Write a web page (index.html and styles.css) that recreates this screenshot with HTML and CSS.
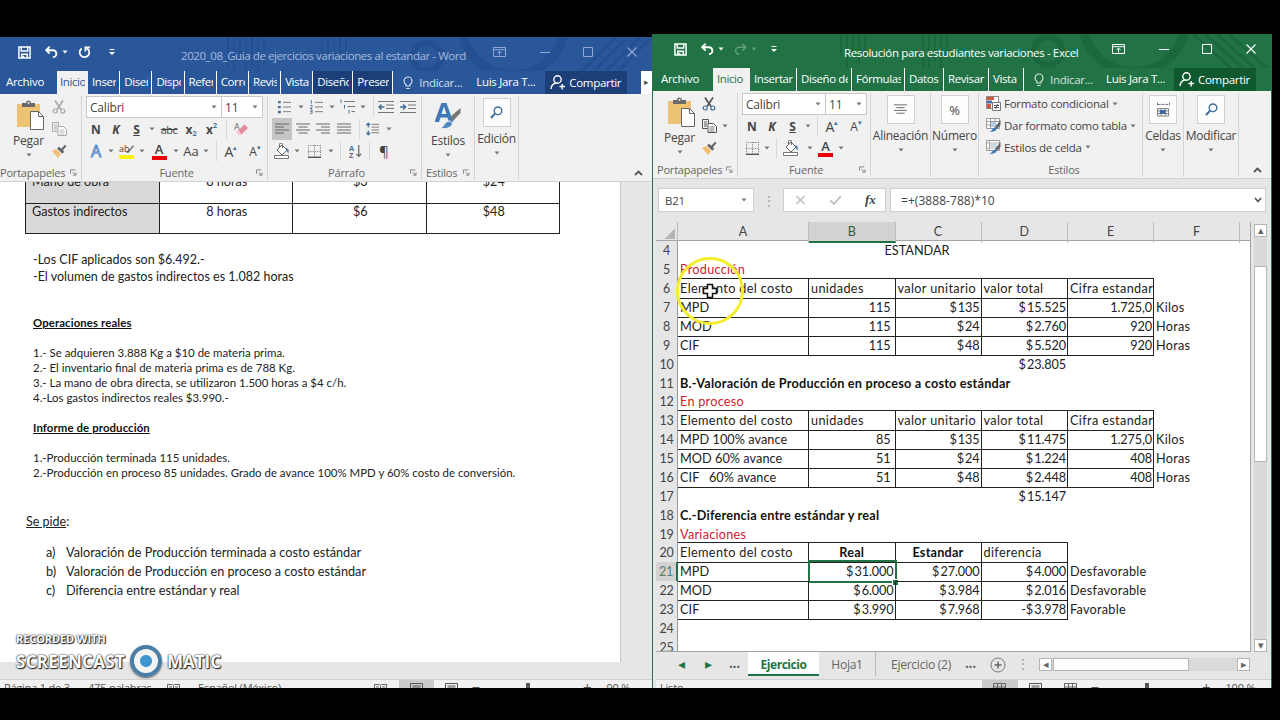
FILE: index.html
```html
<!DOCTYPE html>
<html lang="es">

<head>
    <meta charset="UTF-8">
    <title>Variaciones al estandar</title>
    <link rel="stylesheet" href="styles.css">
</head>

<body>
    <svg class="defs">
        <symbol id="save" viewBox="0 0 14 14"><path d="M1 1h12v12H1zM3.5 1v4.5h7V1M4 13V9h6v4M6 10.5v2" fill="none" stroke="currentColor" stroke-width="1.6" /></symbol>
        <symbol id="undo" viewBox="0 0 14 14"><path d="M1 4.5h7.5a3.7 3.7 0 0 1 0 7.5M5 .8L1.3 4.5 5 8.2" fill="none" stroke="currentColor" stroke-width="2.1" /></symbol>
        <symbol id="redo" viewBox="0 0 14 14"><path d="M13 4.5H5.5a3.7 3.7 0 0 0 0 7.5M9 .8l3.7 3.7L9 8.2" fill="none" stroke="currentColor" stroke-width="1.6" /></symbol>
        <symbol id="repeat" viewBox="0 0 14 14"><path d="M4 2.6a5.2 5.2 0 1 0 5.6-.2M8 6V1.5h5" fill="none" stroke="currentColor" stroke-width="1.9" /></symbol>
        <symbol id="custom" viewBox="0 0 8 8"><path d="M1.5 1.5h5" stroke="currentColor" /><path d="M1 4h6L4 7z" fill="currentColor" /></symbol>
        <symbol id="down" viewBox="0 0 6 4"><path d="M.5.5h5L3 3.4z" fill="currentColor" /></symbol>
        <symbol id="ropt" viewBox="0 0 13 11"><path d="M.5.5h12v9H.5zM.5 2.7h12M6.5 8.5V4M4.5 6l2-2 2 2" fill="none" stroke="currentColor" /></symbol>
        <symbol id="min" viewBox="0 0 10 10"><path d="M0 5.5h10" stroke="currentColor" /></symbol>
        <symbol id="max" viewBox="0 0 10 10"><path d="M.5.5h9v9h-9z" fill="none" stroke="currentColor" /></symbol>
        <symbol id="close" viewBox="0 0 10 10"><path d="M.5.5l9 9M9.5.5l-9 9" stroke="currentColor" stroke-width="1.1" /></symbol>
        <symbol id="bulb" viewBox="0 0 10 14"><path d="M3 10V8.6C1.600 7.600 1 6.500 1 5a4 4 0 0 1 8 0c0 1.500-.6 2.600-2 3.600V10zM3.300 12.500h3.400" fill="none" stroke="currentColor" stroke-width="1.200" /></symbol>
        <symbol id="person" viewBox="0 0 15 15"><circle cx="7.500" cy="4.500" r="3.700" fill="none" stroke="currentColor" stroke-width="1.400" /><path d="M1 14c.3-3.500 2.300-5.500 5-6M9.500 11.500H15M12.200 9v5.500" fill="none" stroke="currentColor" stroke-width="1.400" /></symbol>
        <symbol id="paste" viewBox="0 0 27 30"><path d="M0 4h23v23H0z" fill="#eec273" /><path d="M5 3h4a2.500 2.500 0 0 1 5 0h4v4H5z" fill="#6a6a6a" /><circle cx="11.500" cy="3" r="1" fill="#eee" /><path d="M13.500 11.500h8l5 5v13h-13z" fill="#fff" stroke="#666" /><path d="M21.500 11.500v5h5" fill="none" stroke="#666" /></symbol>
        <symbol id="cut" viewBox="0 0 14 14"><path d="M3 .5l6 9M11 .5l-6 9" stroke="currentColor" stroke-width="1.700" /><circle cx="3.200" cy="11" r="2" fill="none" stroke="var(--ring)" stroke-width="1.200" /><circle cx="10.800" cy="11" r="2" fill="none" stroke="var(--ring)" stroke-width="1.200" /></symbol>
        <symbol id="copy" viewBox="0 0 15 14"><path d="M.5.5h6v3.500M.5.5v9h5M2 3h3M2 5h3M2 7h3" fill="none" stroke="currentColor" /><path d="M6 4.500h5.500l3 3v6H6z" fill="#fff" stroke="currentColor" /><path d="M7.500 8h5M7.500 10h5M7.500 12h5" stroke="currentColor" stroke-width=".8" /></symbol>
        <symbol id="brush" viewBox="0 0 15 14"><path d="M0 7l4-2 5 5-3 4z" fill="#efbf73" /><path d="M5 4.500l2-1.800 2.300 2L13 .8l1.500 1.500-3.600 4 1.400 1.500-2 2z" fill="#666" /></symbol>
        <symbol id="eraser" viewBox="0 0 14 14"><text x="0" y="8" font-size="9" font-family="Open Sans" fill="#666">A</text><path d="M10.500 2.500l3.500 3.500-6.500 6.500H4.500L2.500 10z" fill="#e58da0" /><path d="M2.500 10l2 2.500h3L4.700 8z" fill="#f6ccd4" /></symbol>
        <symbol id="marker" viewBox="0 0 16 16"><path d="M0 12h15v4H0z" fill="#fbf316" /><path d="M7 10L14 2l1 1.500L9.500 10z" fill="#888" /><text x="0" y="9" font-size="9" font-family="Open Sans" fill="#444">ab</text></symbol>
        <symbol id="bucket" viewBox="0 0 16 16"><path d="M3 7l5-5 5 5-5 5z" fill="#fff" stroke="#666" /><path d="M5.500 5V1.500a1.500 1.500 0 0 1 3 0V5" fill="none" stroke="#666" /><path d="M12 5c3 .5 3 3 2.500 5.500L12.500 8z" fill="#4d7fb0" /><path d="M.5 12.500h14v3H.5z" fill="#fff" stroke="#777" /></symbol>
        <symbol id="borders" viewBox="0 0 13 13"><path d="M.5 0v12M6.500 0v12M12.500 0v12M0 .5h13M0 6.500h13" stroke="#777" stroke-dasharray="1 1.300" /><path d="M0 12.300h13" stroke="#555" stroke-width="1.400" /></symbol>
        <symbol id="bullets" viewBox="0 0 14 15"><path d="M0 1h3v2.500H0zM0 6.300h3v2.500H0zM0 11.600h3v2.500H0z" fill="#41719c" /><path d="M5.500 2.500H14M5.500 7.500H14M5.500 12.500H14" stroke="#777" /></symbol>
        <symbol id="numbers" viewBox="0 0 14 15"><path d="M1.500 0v4M.3 5.800h2v1.600l-2 1.700h2.200M.3 10.600h2v3.700h-2M.3 12.400h2" stroke="#41719c" fill="none" stroke-width=".9" /><path d="M5.500 2.500H14M5.500 7.500H14M5.500 12.500H14" stroke="#777" /></symbol>
        <symbol id="multi" viewBox="0 0 16 15"><path d="M1 0v3.500M4.500 5.500v3.500M9 10.500V14" stroke="#41719c" /><path d="M4 2h11M7.500 7H15M11.500 12H15" stroke="#777" /></symbol>
        <symbol id="outdent" viewBox="0 0 16 13"><path d="M0 1h16M8 4.500h8M8 8h8M0 12h16" stroke="#777" /><path d="M6.500 6.500H1M3.500 4L1 6.500 3.500 9" stroke="#41719c" fill="none" stroke-width="1.500" /></symbol>
        <symbol id="indent" viewBox="0 0 16 13"><path d="M0 1h16M8 4.500h8M8 8h8M0 12h16" stroke="#777" /><path d="M0 6.500h5.500M3 4l2.500 2.500L3 9" stroke="#41719c" fill="none" stroke-width="1.500" /></symbol>
        <symbol id="al" viewBox="0 0 14 12"><path d="M0 1h14M0 4h9M0 7h14M0 10h9" stroke="#666" /></symbol>
        <symbol id="ac" viewBox="0 0 14 12"><path d="M0 1h14M2.500 4h9M0 7h14M2.500 10h9" stroke="#666" /></symbol>
        <symbol id="arr" viewBox="0 0 14 12"><path d="M0 1h14M5 4h9M0 7h14M5 10h9" stroke="#666" /></symbol>
        <symbol id="aj" viewBox="0 0 14 12"><path d="M0 1h14M0 4h14M0 7h14M0 10h14" stroke="#666" /></symbol>
        <symbol id="spacing" viewBox="0 0 14 15"><path d="M6 2.500h8M6 5.500h8M6 8.500h8M6 11.500h8" stroke="#777" /><path d="M2.500 1v5M.5 3.500l2-2.300 2 2.300M2.500 9v5M.5 11.500l2 2.300 2-2.300" stroke="#41719c" fill="none" stroke-width="1.300" /></symbol>
        <symbol id="sort" viewBox="0 0 14 15"><text x="0" y="7" font-size="8" font-family="Open Sans" font-weight="bold" fill="#41719c">A</text><text x="0" y="14.500" font-size="8" font-family="Open Sans" font-weight="bold" fill="#7d5a86">Z</text><path d="M10.500 1v12M8 10.500l2.500 2.700L13 10.500" stroke="#666" fill="none" stroke-width="1.300" /></symbol>
        <symbol id="launch" viewBox="0 0 8 7"><path d="M.5 5V.5H6M3 3l3.500 3.500M6.800 3.500V6.500H3.500" fill="none" stroke="#777" /></symbol>
        <symbol id="styles" viewBox="0 0 26 29"><text x="-.5" y="20.500" font-size="27" font-family="Open Sans" font-weight="bold" fill="#3f79b5">A</text><path d="M15 16L25.500 7v5L18 20z" fill="#777" /><path d="M5 27c4 0 4-7 10-7 3 1 3 4 0 6-3 2-7 2-10 1z" fill="#4f88c1" stroke="#f1f1f1" /></symbol>
        <symbol id="lens" viewBox="0 0 13 13"><circle cx="8" cy="4.800" r="3.800" fill="none" stroke="#3f6f9f" stroke-width="1.400" /><path d="M5 7.800L1 12" stroke="#3f6f9f" stroke-width="2" /></symbol>
        <symbol id="up" viewBox="0 0 9 6"><path d="M1 5l3.500-3.500L8 5" fill="none" stroke="#555" stroke-width="1.800" /></symbol>
        <symbol id="cond" viewBox="0 0 15 15"><path d="M.5.500h12v12H.5z" fill="#fff" stroke="#888" /><path d="M1 1h7v3H1zM1 8h4v4H1z" fill="#cf5a3c" /><path d="M1 4.500h5v3H1z" fill="#4472a8" /><path d="M6.500 6.500h8v8h-8z" fill="#fff" stroke="#777" /><path d="M8 9.500h5M8 11.500h5M12 8l-3 5" stroke="#444" stroke-width=".9" /></symbol>
        <symbol id="tblfmt" viewBox="0 0 15 15"><path d="M.5.500h13v10H.5z" fill="#fff" stroke="#999" /><path d="M.5 3.500h13M.5 7h13M4.500.5v10M9 .5v10" stroke="#999" /><path d="M5 4h5v5H5z" fill="#b9cde2" /><path d="M9 9l5.500-7v5L11 11z" fill="#666" /><path d="M3 14c3 0 3-4.500 6.500-4.500 2 1 1.500 4.500-6.500 4.500z" fill="#3f79b5" /></symbol>
        <symbol id="cellfmt" viewBox="0 0 15 15"><path d="M.5.500h13v10H.5z" fill="#fff" stroke="#999" /><path d="M.5 3h13M.5 8h13M3.500.5v10" stroke="#aaa" /><path d="M4 3.500h7v4H4z" fill="#cdd9e6" /><path d="M9 9l5.500-7v5L11 11z" fill="#666" /><path d="M3 14c3 0 3-4.500 6.500-4.500 2 1 1.500 4.500-6.500 4.500z" fill="#3f79b5" /></symbol>
        <symbol id="cells" viewBox="0 0 14 16"><path d="M.5 0v4M13.500 0v4M1 2h12" stroke="#666" stroke-dasharray="3 1" /><path d="M.5 6.500h12v8H.5zM.5 9h12M.5 11.800h12M4.500 6v8M9 6v8" fill="none" stroke="#777" /><path d="M3 8h6v4H3z" fill="#3a6aa3" /></symbol>
        <symbol id="book" viewBox="0 0 13 10"><path d="M.5 1.500h5l1 1 1-1h5v8H.5zM6.500 2.500V10M2 4h3M2 6h3M8 4h3M8 6h3M2 8h3M8 8h3" fill="none" stroke="#666" /></symbol>
        <symbol id="page" viewBox="0 0 13 10"><path d="M.5.5h12v10H.5zM2.500 3h8M2.500 5h8M2.500 7h8M2.500 9h8" fill="none" stroke="#555" /></symbol>
        <symbol id="gridv" viewBox="0 0 13 10"><path d="M.5.5h12v10H.5zM.5 4h12M.5 7.500h12M4.500 0v10M8.500 0v10" fill="none" stroke="#666" /></symbol>
    </svg>

    <div class="desktop">
        <!-- WORD -->
        <section class="win word">
            <header class="titlebar">
                <svg class="deco" width="652" height="56"><g fill="none" stroke="#173f7c" opacity=".3"><path d="M228 0v30M234 0v42M240 0v24M246 0v38M252 0v28M258 0v44M264 0v30M322 0v25M328 0v25M334 0v25M340 0v25M346 0v25" stroke-width="2" /><circle cx="427" cy="20" r="14" stroke-width="6" /><path d="M463 0a52 52 0 0 0 100 0" stroke-width="9" /><path d="M590 50l50-50M600 52l50-50M580 48l46-46M570 46l46-46" stroke-width="3" /></g></svg>
                <div class="qat">
                    <svg class="q14"><use href="#save" /></svg>
                    <svg class="q14 undo"><use href="#undo" /></svg>
                    <svg class="q6"><use href="#down" /></svg>
                    <svg class="q14 rep"><use href="#repeat" /></svg>
                    <svg class="q8"><use href="#custom" /></svg>
                </div>
                <div class="title">2020_08_Guia de ejercicios variaciones al estandar - Word</div>
                <div class="winbtns">
                    <svg class="wr"><use href="#ropt" /></svg>
                    <svg><use href="#min" /></svg>
                    <svg><use href="#max" /></svg>
                    <svg><use href="#close" /></svg>
                </div>
            </header>
            <nav class="tabs">
                <span class="file">Archivo</span>
                <span class="tab on">Inicio</span>
                <span class="tab">Insertar</span>
                <span class="tab">Diseño</span>
                <span class="tab">Dispos</span>
                <span class="tab">Refere</span>
                <span class="tab">Corres</span>
                <span class="tab">Revisar</span>
                <span class="tab">Vista</span>
                <span class="tab ctx">Diseño</span>
                <span class="tab ctx">Presen</span>
                <span class="tell"><svg><use href="#bulb" /></svg>Indicar...</span>
                <span class="user">Luis Jara T...</span>
                <span class="share"><svg><use href="#person" /></svg>Compartir</span>
                <span class="more">▸</span>
            </nav>
            <div class="ribbon">
                <div class="group g-clip">
                    <div class="body">
                        <div class="big"><svg class="paste"><use href="#paste" /></svg><b>Pegar</b><svg class="dn"><use href="#down" /></svg></div>
                        <div class="stack off">
                            <svg class="s14"><use href="#cut" /></svg>
                            <svg class="s15"><use href="#copy" /></svg>
                            <svg class="s15"><use href="#brush" /></svg>
                        </div>
                    </div>
                    <footer>Portapapeles<svg><use href="#launch" /></svg></footer>
                </div>
                <div class="group g-font">
                    <div class="body col">
                        <div class="combos"><span class="combo cf">Calibri<svg class="dn"><use href="#down" /></svg></span><span class="combo cs">11<svg class="dn"><use href="#down" /></svg></span></div>
                        <div class="row">
                            <i class="w20 bold">N</i><i class="w20 bold ital">K</i><i class="w22 bold und">S</i><i class="w10"><svg class="dn"><use href="#down" /></svg></i>
                            <i class="w24 strike">abc</i><i class="w20 bold">x<sub>2</sub></i><i class="w22 bold">x<sup>2</sup></i><i class="sep"></i><i class="w28"><svg class="s14"><use href="#eraser" /></svg></i>
                        </div>
                        <div class="row">
                            <i class="w20 fx-a">A</i><i class="w10"><svg class="dn"><use href="#down" /></svg></i>
                            <i class="w22"><svg class="s16"><use href="#marker" /></svg></i><i class="w10"><svg class="dn"><use href="#down" /></svg></i>
                            <i class="w24"><em class="red">A</em></i><i class="w10"><svg class="dn"><use href="#down" /></svg></i>
                            <i class="w20 aa">Aa</i><i class="w10"><svg class="dn"><use href="#down" /></svg></i><i class="sep s6"></i>
                            <i class="w28 grow">A<sup>▴</sup></i><i class="w20 shrink">A<sup>▾</sup></i>
                        </div>
                    </div>
                    <footer>Fuente<svg><use href="#launch" /></svg></footer>
                </div>
                <div class="group g-para">
                    <div class="body col">
                        <div class="row">
                            <i class="w24"><svg class="s15"><use href="#bullets" /></svg></i><i class="w10"><svg class="dn"><use href="#down" /></svg></i>
                            <i class="w22"><svg class="s15"><use href="#numbers" /></svg></i><i class="w10"><svg class="dn"><use href="#down" /></svg></i>
                            <i class="w22"><svg class="s16"><use href="#multi" /></svg></i><i class="w10"><svg class="dn"><use href="#down" /></svg></i><i class="sep s6"></i>
                            <i class="w24"><svg class="s16"><use href="#outdent" /></svg></i><i class="w20"><svg class="s16"><use href="#indent" /></svg></i>
                        </div>
                        <div class="row">
                            <i class="w20 sel"><svg class="s14"><use href="#al" /></svg></i><i class="w22"><svg class="s14"><use href="#ac" /></svg></i><i class="w20"><svg class="s14"><use href="#arr" /></svg></i><i class="w22"><svg class="s14"><use href="#aj" /></svg></i><i class="sep s6"></i>
                            <i class="w24"><svg class="s15"><use href="#spacing" /></svg></i><i class="w10"><svg class="dn"><use href="#down" /></svg></i>
                        </div>
                        <div class="row">
                            <i class="w20"><svg class="s16"><use href="#bucket" /></svg></i><i class="w10"><svg class="dn"><use href="#down" /></svg></i>
                            <i class="w24"><svg class="s13"><use href="#borders" /></svg></i><i class="w10"><svg class="dn"><use href="#down" /></svg></i><i class="sep s4"></i>
                            <i class="w28"><svg class="s15"><use href="#sort" /></svg></i><i class="sep s0"></i><i class="w28 pil">¶</i>
                        </div>
                    </div>
                    <footer>Párrafo<svg><use href="#launch" /></svg></footer>
                </div>
                <div class="group g-style">
                    <div class="body"><div class="big"><svg class="styl"><use href="#styles" /></svg><b>Estilos</b><svg class="dn"><use href="#down" /></svg></div></div>
                    <footer>Estilos<svg><use href="#launch" /></svg></footer>
                </div>
                <div class="group g-edit">
                    <div class="body"><div class="big"><span class="box"><svg><use href="#lens" /></svg></span><b>Edición</b><svg class="dn"><use href="#down" /></svg></div></div>
                </div>
                <svg class="collapse"><use href="#up" /></svg>
            </div>
            <div class="docarea">
                <div class="page">
                    <table>
                        <tr><th>Mano de obra</th><td>8 horas</td><td>$3</td><td>$24</td></tr>
                        <tr><th>Gastos indirectos</th><td>8 horas</td><td>$6</td><td>$48</td></tr>
                    </table>
                    <p class="notes">-Los CIF aplicados son $6.492.-<br>-El volumen de gastos indirectos es 1.082 horas</p>
                    <h4 class="h1st">Operaciones reales</h4>
                    <p class="small">1.- Se adquieren 3.888 Kg a $10 de materia prima.<br>2.- El inventario final de materia prima es de 788 Kg.<br>3.- La mano de obra directa, se utilizaron 1.500 horas a $4 c/h.<br>4.-Los gastos indirectos reales $3.990.-</p>
                    <h4>Informe de producción</h4>
                    <p class="small prod">1.-Producción terminada 115 unidades.<br>2.-Producción en proceso 85 unidades. Grado de avance 100% MPD y 60% costo de conversión.</p>
                    <p class="ask"><u>Se pide</u>:</p>
                    <ol>
                        <li><span>a)</span>Valoración de Producción terminada a costo estándar</li>
                        <li><span>b)</span>Valoración de Producción en proceso a costo estándar</li>
                        <li><span>c)</span>Diferencia entre estándar y real</li>
                    </ol>
                </div>
            </div>
            <div class="status">
                <span class="st1">Página 1 de 3</span><span class="st2">475 palabras</span><svg class="st3"><use href="#book" /></svg><span class="st4">Español (México)</span>
                <span class="views"><i><svg><use href="#book" /></svg></i><i class="cur"><svg><use href="#page" /></svg></i><i><svg><use href="#page" /></svg></i></span>
                <span class="zoom"><i>−</i><i class="track"></i><i>+</i></span><span>90 %</span>
            </div>
        </section>

        <!-- EXCEL -->
        <section class="win excel">
            <header class="titlebar">
                <svg class="deco" width="615" height="56"><g fill="none" stroke="#0f4f2c" opacity=".3"><path d="M188 0v22M194 0v34M200 0v18M206 0v30M212 0v22M270 0v34M276 0v40M282 0v28M288 0v36M294 0v24" stroke-width="2" /><circle cx="395" cy="17" r="14" stroke-width="6" /><path d="M431 0a52 52 0 0 0 100 0" stroke-width="9" /><path d="M540 0l55 50M552 0l55 50M564 0l50 46M576 0l40 36" stroke-width="3" /></g></svg>
                <div class="qat">
                    <svg class="q14"><use href="#save" /></svg>
                    <svg class="q14 undo"><use href="#undo" /></svg>
                    <svg class="q6"><use href="#down" /></svg>
                    <svg class="q14 rep dim"><use href="#redo" /></svg>
                    <svg class="q6 dim"><use href="#down" /></svg>
                    <svg class="q8"><use href="#custom" /></svg>
                </div>
                <div class="title">Resolución para estudiantes variaciones - Excel</div>
                <div class="winbtns">
                    <svg class="wr"><use href="#ropt" /></svg>
                    <svg><use href="#min" /></svg>
                    <svg><use href="#max" /></svg>
                    <svg><use href="#close" /></svg>
                </div>
            </header>
            <nav class="tabs">
                <span class="file">Archivo</span>
                <span class="tab on">Inicio</span>
                <span class="tab x1">Insertar</span>
                <span class="tab x2">Diseño de</span>
                <span class="tab x3">Fórmulas</span>
                <span class="tab x4">Datos</span>
                <span class="tab x5">Revisar</span>
                <span class="tab x6">Vista</span>
                <span class="tell"><svg><use href="#bulb" /></svg>Indicar...</span>
                <span class="user">Luis Jara T...</span>
                <span class="share"><svg><use href="#person" /></svg>Compartir</span>
            </nav>
            <div class="ribbon">
                <div class="group g-clip">
                    <div class="body">
                        <div class="big"><svg class="paste"><use href="#paste" /></svg><b>Pegar</b><svg class="dn"><use href="#down" /></svg></div>
                        <div class="stack">
                            <svg class="s14"><use href="#cut" /></svg>
                            <span class="cp"><svg class="s15"><use href="#copy" /></svg><svg class="dn"><use href="#down" /></svg></span>
                            <svg class="s15"><use href="#brush" /></svg>
                        </div>
                    </div>
                    <footer>Portapapeles<svg><use href="#launch" /></svg></footer>
                </div>
                <div class="group g-font">
                    <div class="body col">
                        <div class="combos"><span class="combo cf">Calibri<svg class="dn"><use href="#down" /></svg></span><span class="combo cs">11<svg class="dn"><use href="#down" /></svg></span></div>
                        <div class="row">
                            <i class="w20 bold">N</i><i class="w20 bold ital">K</i><i class="w22 bold und">S</i><i class="w10"><svg class="dn"><use href="#down" /></svg></i><i class="sep s4"></i><i class="w28 grow">A<sup>▴</sup></i><i class="w20 shrink">A<sup>▾</sup></i>
                        </div>
                        <div class="row">
                            <i class="w20"><svg class="s13"><use href="#borders" /></svg></i><i class="w10"><svg class="dn"><use href="#down" /></svg></i><i class="sep s4"></i>
                            <i class="w28"><svg class="s16"><use href="#bucket" /></svg></i><i class="w10"><svg class="dn"><use href="#down" /></svg></i>
                            <i class="w22"><em class="red">A</em></i><i class="w10"><svg class="dn"><use href="#down" /></svg></i>
                        </div>
                    </div>
                    <footer>Fuente<svg><use href="#launch" /></svg></footer>
                </div>
                <div class="group g-align">
                    <div class="body"><div class="big"><span class="box"><svg><use href="#ac" /></svg></span><b>Alineación</b><svg class="dn"><use href="#down" /></svg></div></div>
                </div>
                <div class="group g-num">
                    <div class="body"><div class="big"><span class="box">%</span><b>Número</b><svg class="dn"><use href="#down" /></svg></div></div>
                </div>
                <div class="group g-sty">
                    <div class="body col">
                        <div class="cmd"><svg><use href="#cond" /></svg>Formato condicional<svg class="dn"><use href="#down" /></svg></div>
                        <div class="cmd"><svg><use href="#tblfmt" /></svg>Dar formato como tabla<svg class="dn"><use href="#down" /></svg></div>
                        <div class="cmd"><svg><use href="#cellfmt" /></svg>Estilos de celda<svg class="dn"><use href="#down" /></svg></div>
                    </div>
                    <footer>Estilos</footer>
                </div>
                <div class="group g-cell">
                    <div class="body"><div class="big"><span class="box"><svg class="cel"><use href="#cells" /></svg></span><b>Celdas</b><svg class="dn"><use href="#down" /></svg></div></div>
                </div>
                <div class="group g-mod">
                    <div class="body"><div class="big"><span class="box"><svg><use href="#lens" /></svg></span><b>Modificar</b><svg class="dn"><use href="#down" /></svg></div></div>
                </div>
                <svg class="collapse"><use href="#up" /></svg>
            </div>
            <div class="fbar">
                <div class="namebox">B21<svg class="dn"><use href="#down" /></svg></div>
                <span class="dots">⋮</span>
                <div class="fbtns"><svg><path d="M1.500 2l8 8M9.500 2l-8 8" stroke="#bbb" stroke-width="1.500" /></svg><svg><path d="M.5 6.500L4 10l7-8" fill="none" stroke="#bbb" stroke-width="1.800" /></svg><span>fx</span></div>
                <div class="formula">=+(3888-788)*10<svg viewBox="0 0 8 6"><path d="M1 1l3 3.500L7 1" fill="none" stroke="#555" stroke-width="1.700" /></svg></div>
            </div>
            <div class="sheetwrap">
                <div class="sheet">
                    <div class="r cols"><span class="corner"></span><span>A</span><span class="on">B</span><span>C</span><span>D</span><span>E</span><span>F</span><span class="last"></span></div>
                    <div id="rows"></div>
                </div>
                <div class="vscroll"><i>▴</i><b></b><i class="btm">▾</i></div>
            </div>
            <div class="sheettabs">
                <span class="nav first">◂</span><span class="nav">▸</span><span class="el">...</span>
                <span class="st on">Ejercicio</span><span class="st s2">Hoja1</span><span class="st s3">Ejercicio (2)</span><span class="el">...</span>
                <svg class="plus" viewBox="0 0 16 16"><circle cx="8" cy="8" r="7" fill="none" stroke="#777" /><path d="M8 4.500v7M4.500 8h7" stroke="#666" stroke-width="1.500" /></svg>
                <span class="dots">⋮</span>
                <div class="hscroll"><i>◂</i><b></b><i class="rt">▸</i></div>
            </div>
            <div class="status">
                <span class="st1">Listo</span>
                <span class="views"><i class="cur"><svg><use href="#gridv" /></svg></i><i><svg><use href="#page" /></svg></i><i><svg><use href="#gridv" /></svg></i></span>
                <span class="zoom"><i>−</i><i class="track"></i><i>+</i></span><span>100 %</span>
            </div>
        </section>
    </div>

    <svg class="pointer" viewBox="0 0 70 70"><circle cx="35" cy="35" r="32.500" fill="none" stroke="#f3ee2c" stroke-width="3" /><path d="M32.500 28.500h5v4h4v5h-4v4h-5v-4h-4v-5h4z" fill="#fff" stroke="#111" stroke-width="1.500" /></svg>

    <div class="watermark">
        <div class="wm1">RECORDED WITH</div>
        <div class="wm2"><span class="sc">SCREENCAST</span><span class="ring"></span><span class="ma">MATIC</span></div>
    </div>

    <script>
        // celda: [texto, clases]  b = borde, n = numero, t = borde superior
        const head = [['Elemento del costo', 'b t'], ['unidades', 'b t'], ['valor unitario', 'b t'], ['valor total', 'b t'], ['Cifra estandar', 'b t']];
        function line(a, u, vu, vt, c, f) {
            return [[a, 'b lbl'], [u, 'b n u'], [vu, 'b n'], [vt, 'b n'], [c, 'b n'], [f, 'side']];
        }
        function diff(a, r, e, d, f, c) {
            return [[a, 'b lbl'], [r, 'b n ' + (c || '')], [e, 'b n'], [d, 'b n'], [f, 'side']];
        }
        const data = {
            4: [['', ''], ['', ''], ['ESTANDAR', 'est']],
            5: [['Producción', 'rd']],
            6: head,
            7: line('MPD', '115', '$ 135', '$ 15.525', '1.725,0', 'Kilos'),
            8: line('MOD', '115', '$ 24', '$ 2.760', '920', 'Horas'),
            9: line('CIF', '115', '$ 48', '$ 5.520', '920', 'Horas'),
            10: [['', ''], ['', ''], ['', ''], ['$ 23.805', 'n']],
            11: [['B.-Valoración de Producción en proceso a costo estándar', 'bo']],
            12: [['En proceso', 'rd']],
            13: head,
            14: line('MPD 100% avance', '85', '$ 135', '$ 11.475', '1.275,0', 'Kilos'),
            15: line('MOD 60% avance', '51', '$ 24', '$ 1.224', '408', 'Horas'),
            16: line('CIF   60% avance', '51', '$ 48', '$ 2.448', '408', 'Horas'),
            17: [['', ''], ['', ''], ['', ''], ['$ 15.147', 'n']],
            18: [['C.-Diferencia entre estándar y real', 'bo']],
            19: [['Variaciones', 'rd']],
            20: [['Elemento del costo', 'b t'], ['Real', 'b t bo c'], ['Estandar', 'b t bo c'], ['diferencia', 'b t']],
            21: diff('MPD', '$ 31.000', '$ 27.000', '$ 4.000', 'Desfavorable', 'active'),
            22: diff('MOD', '$ 6.000', '$ 3.984', '$ 2.016', 'Desfavorable'),
            23: diff('CIF', '$ 3.990', '$ 7.968', '-$ 3.978', 'Favorable'),
            24: [],
            25: []
        };
        const rows = document.getElementById('rows');
        Object.keys(data).forEach(n => {
            const r = document.createElement('div');
            r.className = 'r';
            const h = document.createElement('span');
            h.className = 'rh' + (n === '21' ? ' on' : '');
            h.textContent = n;
            r.appendChild(h);
            data[n].forEach(c => {
                const s = document.createElement('span');
                s.className = 'cell ' + c[1];
                s.textContent = c[0];
                r.appendChild(s);
            });
            rows.appendChild(r);
        });
    </script>
</body>

</html>
```
FILE: styles.css
```css
* {
    box-sizing: border-box;
}

body {
    margin: 0;
    width: 1280px;
    height: 720px;
    overflow: hidden;
    background: #000;
    font-family: "Open Sans", "Noto Sans", sans-serif;
    font-size: 12px;
    color: #444;
    position: relative;
}

i,
em {
    font-style: normal;
}

svg {
    flex: none;
    overflow: visible;
}

.defs {
    position: absolute;
    width: 0;
    height: 0;
}

.desktop {
    display: flex;
    align-items: flex-end;
    height: 688px;
}

.win {
    display: flex;
    flex-direction: column;
    overflow: hidden;
}

.word {
    --main: #2a579a;
    --dark: #1c3f78;
    width: 652px;
    height: 651px;
    background: #e6e6e6;
}

.excel {
    --main: #217346;
    --dark: #10592f;
    width: 620px;
    height: 654px;
    background: #e6e6e6;
    border-left: 1px solid #2f6b4c;
    border-right: 1px solid #2f6b4c;
    padding-left: 3px;
    position: relative;
}

/* title bar */
.titlebar {
    position: relative;
    height: 34px;
    flex: none;
    display: flex;
    align-items: center;
    background: var(--main);
    color: #fff;
}

.excel .titlebar,
.excel .tabs,
.excel .ribbon {
    margin-left: -3px;
    padding-left: 3px;
}

.deco {
    position: absolute;
    left: 0;
    top: 0;
}

.qat {
    display: flex;
    align-items: center;
    width: 181px;
    padding: 0 0 4px 18px;
    position: relative;
}

.excel .qat {
    width: 188px;
    padding-left: 18px;
}

.q14 {
    width: 13px;
    height: 13px;
}

.q6 {
    width: 6px;
    height: 4px;
    margin-left: 4px;
}

.q8 {
    width: 8px;
    height: 8px;
    margin-left: 17px;
}

.undo {
    margin-left: 14px;
}

.rep {
    margin-left: 10px;
}

.excel .q8 {
    margin-left: 13px;
}

.dim {
    opacity: .3;
}

.title {
    font-size: 11.500px;
    letter-spacing: -.42px;
    white-space: nowrap;
    width: 286px;
    padding-top: 2px;
    position: relative;
}

.word .title {
    color: #a5bbdf;
}

.winbtns {
    display: flex;
    align-items: center;
    gap: 33.500px;
    padding: 0 0 4px 26px;
    position: relative;
}

.word .winbtns {
    color: #8ea9d4;
}

.excel .title {
    width: 235px;
    letter-spacing: -.37px;
}

.excel .winbtns {
    padding-left: 33px;
}

.winbtns svg {
    width: 10px;
    height: 10px;
}

.winbtns .wr {
    width: 13px;
    height: 11px;
}

/* tabs */
.tabs {
    height: 23px;
    flex: none;
    display: flex;
    background: var(--main);
    color: #fff;
    font-size: 11.500px;
    line-height: 22px;
    letter-spacing: -.3px;
    white-space: nowrap;
    position: relative;
}

.file {
    width: 57px;
    padding-left: 6px;
}

.tab {
    width: 32.200px;
    border-right: 1px solid #fff;
    padding-left: 4px;
    position: relative;
    overflow: hidden;
    letter-spacing: -.4px;
}

.tab::after {
    content: "";
    position: absolute;
    right: 0;
    top: 0;
    width: 3px;
    height: 100%;
    background: var(--main);
}

.tab.on {
    width: 31px;
    background: #f1f1f1;
    color: var(--main);
    border: 0;
    padding-left: 3px;
}

.tab.on::after {
    background: #f1f1f1;
}

.tab.ctx {
    width: 40px;
    background: var(--dark);
}

.tab.ctx::after {
    background: var(--dark);
}

.tell {
    display: flex;
    align-items: center;
    opacity: .8;
    width: 83px;
    padding-left: 10px;
}

.tell svg {
    width: 10px;
    height: 14px;
    margin-right: 6px;
}

.user {
    width: 69px;
}

.share {
    display: flex;
    align-items: center;
    width: 82px;
    background: var(--dark);
    padding-left: 5px;
}

.share svg {
    width: 15px;
    height: 15px;
    margin-right: 4px;
}

.more {
    margin-left: auto;
    width: 11px;
    background: #fff;
    color: #555;
    font-size: 9px;
    text-align: center;
}

.excel .file {
    padding-left: 5px;
}

.excel .tab.on {
    width: 37px;
    padding-left: 4px;
}

.excel .x1 {
    width: 47px;
}

.excel .x2 {
    width: 55px;
}

.excel .x3 {
    width: 53px;
}

.excel .x4 {
    width: 39px;
}

.excel .x5 {
    width: 45px;
}

.excel .x6 {
    width: 35px;
}

.excel .tell {
    width: 82px;
}

.excel .user {
    width: 68px;
}

/* ribbon */
.ribbon {
    height: 88px;
    flex: none;
    display: flex;
    background: #f1f1f1;
    border-bottom: 1px solid #d2d2d2;
    position: relative;
}

.group {
    height: 84px;
    margin-top: 2px;
    border-right: 1px solid #d4d4d4;
    display: flex;
    flex-direction: column;
    flex: none;
    white-space: nowrap;
}

.body {
    display: flex;
    height: 69px;
    flex: none;
}

.col {
    flex-direction: column;
}

.group footer {
    display: flex;
    align-items: center;
    justify-content: center;
    height: 15px;
    font-size: 11px;
    letter-spacing: -.2px;
    color: #666;
    position: relative;
}

.group footer svg {
    position: absolute;
    right: 4px;
    width: 7px;
    height: 7px;
}

.big {
    display: flex;
    flex-direction: column;
    align-items: center;
    width: 100%;
    padding-top: 2px;
}

.big b {
    font-weight: normal;
    font-size: 12px;
    letter-spacing: -.25px;
    line-height: 16px;
    margin-top: 4px;
}

.dn {
    width: 6px;
    height: 4px;
    color: #777;
}

.big .dn {
    margin-top: 4px;
}

.box {
    width: 28px;
    height: 29px;
    background: #fdfdfd;
    border: 1px solid #d0d0d0;
    display: flex;
    align-items: center;
    justify-content: center;
    font-size: 13px;
}

.box svg {
    width: 13px;
    height: 13px;
}

.box .cel {
    height: 16px;
}

.paste {
    width: 27px;
    height: 30px;
    margin: 2px 0 -1px 4px;
}

.styl {
    width: 26px;
    height: 29px;
    margin: 3px 0 -1px;
}

.g-clip {
    width: 82px;
}

.g-clip footer {
    justify-content: flex-start;
}

.g-clip .big {
    width: 57px;
}

.excel .g-clip footer {
    padding-left: 1px;
}

.excel .g-clip .big {
    width: 47px;
}

.stack {
    --ring: #41719c;
    color: #555;
    display: flex;
    flex-direction: column;
    gap: 8px;
    padding-top: 4px;
}

.stack.off {
    --ring: #aaa;
    color: #aaa;
    margin-left: -5px;
}

.excel .stack {
    margin-left: -1px;
}

.cp {
    display: flex;
    align-items: center;
    gap: 5px;
}

.s13 {
    width: 13px;
    height: 13px;
}

.s14 {
    width: 14px;
    height: 14px;
}

.s15 {
    width: 15px;
    height: 14px;
}

.s16 {
    width: 16px;
    height: 16px;
}

.g-font {
    width: 186px;
    padding-left: 4px;
}

.combos {
    display: flex;
    height: 22px;
}

.combo {
    background: #fff;
    border: 1px solid #c8c8c8;
    display: flex;
    align-items: center;
    justify-content: space-between;
    padding: 0 4px 0 3px;
    letter-spacing: -.2px;
}

.cf {
    width: 136px;
}

.cs {
    width: 42px;
    margin-left: -1px;
}

.excel .cf {
    width: 84px;
}

.row {
    display: flex;
    align-items: center;
    height: 22px;
}

.row i {
    display: flex;
    align-items: center;
    justify-content: center;
    height: 22px;
    flex: none;
}

.w10 {
    width: 10px;
}

.w20 {
    width: 20px;
}

.w22 {
    width: 21px;
}

.w24 {
    width: 24px;
}

.w28 {
    width: 28px;
}

.row .sep {
    width: 1px;
    height: 20px;
    background: #d6d6d6;
    margin: 0 0 0 4px;
}

.row .s6 {
    margin-left: 5px;
}

.row .s0 {
    margin-left: 0;
}

.bold {
    font-weight: bold;
}

.ital {
    font-style: italic !important;
}

.und {
    text-decoration: underline;
}

.strike {
    font-size: 11px;
    letter-spacing: -.5px;
    text-decoration: line-through;
}

.row sub,
.row sup {
    font-size: 7px;
    color: #41719c;
}

.row sub {
    margin-top: 8px;
}

.row sup {
    margin-top: -8px;
}

.fx-a {
    font-size: 16px;
    color: #fff;
    -webkit-text-stroke: 1px #5b8fc7;
}

.red {
    border-bottom: 4px solid #e8000b;
    width: 15px;
    height: 17px;
    line-height: 13px;
    text-align: center;
    font-size: 13px;
    font-weight: 600;
}

.aa {
    font-size: 13px;
}

.grow {
    font-size: 14px;
}

.shrink {
    font-size: 12px;
}

.g-para {
    width: 154px;
    padding-left: 4px;
}

.sel {
    background: #c5c5c5;
}

.pil {
    font-size: 15px;
}

.g-style {
    width: 53px;
}

.g-style footer {
    justify-content: flex-start;
    padding-left: 4px;
}

.g-edit {
    width: 44px;
}

.collapse {
    position: absolute;
    right: 9px;
    bottom: 5px;
    width: 9px;
    height: 6px;
}

.excel .g-font {
    width: 133px;
}

.g-align {
    width: 60px;
}

.g-num {
    width: 48px;
}

.g-sty {
    width: 164px;
    padding-left: 7px;
}

.cmd {
    display: flex;
    align-items: center;
    height: 21.800px;
    letter-spacing: -.27px;
    font-size: 11.500px;
}

.cmd svg {
    width: 15px;
    height: 15px;
    margin-right: 3px;
}

.cmd .dn {
    width: 6px;
    height: 4px;
    margin-left: 3px;
}

.g-cell {
    width: 41px;
}

.g-mod {
    width: 55px;
}

/* document */
.docarea {
    height: 497px;
    flex: none;
    overflow: hidden;
    background: #e6e6e6;
    font-family: Lato, Carlito, sans-serif;
    color: #222;
}

.page {
    width: 621px;
    height: 480px;
    background: #fff;
    border-right: 1px solid #c6c6c6;
    overflow: hidden;
    white-space: nowrap;
    padding-left: 25px;
}

.page table {
    border-collapse: collapse;
    table-layout: fixed;
    width: 535px;
    margin-top: -9px;
    font-size: 12.600px;
}

.page th,
.page td {
    border: 1px solid #222;
    height: 30px;
    padding: 0 0 0 6px;
    vertical-align: top;
    font-weight: normal;
    line-height: 16px;
    text-align: center;
}

.page th {
    background: #d9d9d9;
    text-align: left;
}

.page td {
    padding-left: 2px;
}

.page p,
.page h4 {
    margin: 0 0 0 8px;
}

.page .notes {
    margin-top: 17px;
    font-size: 12.500px;
    line-height: 17px;
}

.page h4 {
    font-size: 11.400px;
    letter-spacing: .1px;
    line-height: 15px;
    text-decoration: underline;
    margin-top: 15px;
    color: #111;
}

.page .h1st {
    margin-top: 30px;
}

.page .small {
    font-size: 11.450px;
    line-height: 15.100px;
    margin-top: 15px;
}

.page .ask {
    font-size: 12.500px;
    line-height: 19px;
    margin: 31px 0 0 1px;
}

.page ol {
    list-style: none;
    margin: 12px 0 0;
    padding: 0 0 0 21px;
    font-size: 12.700px;
    line-height: 19px;
}

.page li {
    display: flex;
}

.page li span {
    width: 20px;
}

/* status bars */
.status {
    flex: 1;
    min-height: 0;
    background: #f1f1f1;
    border-top: 1px solid #d0d0d0;
    display: flex;
    font-size: 11px;
    line-height: 15px;
    letter-spacing: -.2px;
    white-space: nowrap;
    overflow: hidden;
    color: #555;
}

.st1 {
    width: 84px;
    padding-left: 4px;
}

.st2 {
    width: 83px;
    padding-left: 4px;
}

.st3 {
    width: 13px;
    height: 10px;
    margin: 3px 18px 0 0;
}

.st4 {
    width: 165px;
}

.views {
    display: flex;
}

.views i {
    width: 35.500px;
    display: flex;
    justify-content: center;
    padding-top: 3px;
}

.views svg {
    width: 13px;
    height: 10px;
}

.views .cur {
    background: #cacaca;
}

.zoom {
    display: flex;
    gap: 4px;
    width: 137px;
    padding-left: 2px;
    font-size: 15px;
}

.track {
    width: 95px;
    height: 1px;
    margin-top: 8px;
    background: #999;
    position: relative;
}

.track::after {
    content: "";
    position: absolute;
    left: 42px;
    top: -5px;
    width: 4px;
    height: 10px;
    background: #555;
}

.excel .st1 {
    width: 326px;
}

/* formula bar */
.fbar {
    height: 43px;
    flex: none;
    display: flex;
    align-items: center;
    padding: 0 5px 1px 2px;
    background: #e6e6e6;
}

.fbar>div {
    height: 24px;
    background: #fff;
    border: 1px solid #cfcfcf;
    display: flex;
    align-items: center;
}

.fbar .namebox {
    width: 96px;
    justify-content: space-between;
    padding: 0 6px;
    letter-spacing: -.3px;
    font-size: 11.500px;
}

.dots {
    width: 29px;
    text-align: center;
    color: #999;
}

.fbar .fbtns {
    width: 103px;
    padding-left: 11px;
    gap: 23px;
}

.fbtns svg {
    width: 12px;
    height: 12px;
}

.fbtns span {
    font: italic bold 13px "Liberation Serif", serif;
}

.fbar .formula {
    flex: 1;
    margin-left: 4px;
    padding: 0 3px 0 10px;
    justify-content: space-between;
    letter-spacing: .05px;
}

.formula svg {
    width: 8px;
    height: 6px;
}

/* sheet */
.sheetwrap {
    display: flex;
    height: 430px;
    flex: none;
    overflow: hidden;
}

.sheet {
    width: 595px;
    height: 430px;
    overflow: hidden;
    background: #fff;
    border-right: 1px solid #a5a5a5;
    border-bottom: 1px solid #a5a5a5;
    font-family: Lato, Carlito, sans-serif;
    font-size: 12.700px;
    color: #222;
}

.r {
    display: grid;
    grid-template-columns: 22px 131px 86.500px 86px 86.500px 86px 86px 11px;
    height: 18.890px;
}

.cols {
    height: 19.400px;
    background: #e6e6e6;
    border-bottom: 1px solid #a5a5a5;
    width: 600px;
    text-align: center;
    line-height: 19px;
    font-size: 12.500px;
    color: #444;
}

.cols span {
    border-right: 1px solid #bdbdbd;
}

.cols .on {
    background: #d2d2d2;
    border-bottom: 2px solid #217346;
    color: #2c6045;
}

.cols .last {
    border: 0;
}

.corner {
    background: linear-gradient(135deg, transparent 50%, #b4b4b4 50%) no-repeat 8px 6px / 11px 11px;
}

.rh {
    background: #e6e6e6;
    border-right: 1px solid #999;
    border-bottom: 1px solid #c4c4c4;
    text-align: center;
    font-size: 12.500px;
    line-height: 19px;
    color: #444;
    letter-spacing: -.2px;
}

.rh.on {
    background: #d2d2d2;
    border-right: 2px solid #217346;
    color: #55806a;
}

.cell {
    padding: 0 2px;
    line-height: 19px;
    white-space: pre;
    position: relative;
    letter-spacing: .36px;
}

.lbl {
    letter-spacing: .05px;
}

.cell.est,
.side {
    letter-spacing: 0;
}

.side {
    letter-spacing: .25px;
}

.b {
    border-right: 1px solid #222;
    border-bottom: 1px solid #222;
}

.t {
    box-shadow: 0 -1px 0 #222;
}

.n {
    text-align: right;
    word-spacing: -2px;
    padding-right: 1px;
    letter-spacing: -.12px;
}

.n.u {
    padding-right: 4px;
}

.cell.n:not(.b) {
    padding-right: 2px;
}

.bo {
    font-weight: bold;
    color: #111;
    letter-spacing: .2px;
}

.c {
    text-align: center;
}

.rd {
    color: #cf2030;
    letter-spacing: .25px;
}

.est {
    margin-left: -13px;
}

.active::before {
    content: "";
    position: absolute;
    inset: -2px -2px -2px -1px;
    border: 2px solid #217346;
}

.active::after {
    content: "";
    position: absolute;
    right: -3px;
    bottom: -4px;
    width: 5px;
    height: 5px;
    background: #217346;
    outline: 1px solid #fff;
}

.vscroll {
    width: 13px;
    margin: 2px 0 0 3px;
    background: #dadada;
    display: flex;
    flex-direction: column;
}

.vscroll i,
.hscroll i {
    background: #fff;
    border: 1px solid #b5b5b5;
    width: 13px;
    height: 13px;
    font-size: 11px;
    line-height: 10px;
    text-align: center;
    color: #666;
    flex: none;
}

.vscroll b {
    height: 196px;
    margin-top: 29px;
    background: #fff;
    border: 1px solid #b5b5b5;
}

.vscroll .btm {
    margin-top: auto;
}

.sheettabs {
    height: 27px;
    flex: none;
    display: flex;
    align-items: flex-start;
    line-height: 24px;
    white-space: nowrap;
    letter-spacing: -.25px;
    color: #666;
}

.nav {
    width: 27px;
    padding-left: 5px;
    text-align: center;
    font-size: 14px;
    color: #217346;
}

.nav.first {
    margin-left: 9px;
}

.el {
    width: 29px;
    text-align: center;
    padding-left: 2px;
    font-size: 14px;
    font-weight: bold;
    line-height: 22px;
}

.st {
    height: 24px;
    line-height: 26px;
    text-align: center;
}

.st.on {
    width: 71px;
    background: #fff;
    border-bottom: 2px solid #217346;
    color: #217346;
    font-weight: bold;
    letter-spacing: -.45px;
}

.s2 {
    width: 57px;
    border-right: 1px solid #bbb;
}

.s3 {
    width: 88px;
    padding-left: 2px;
}

.s3+.el {
    width: 23px;
    padding: 0;
    text-align: center;
    margin-left: -5px;
    margin-right: 5px;
}

.plus {
    width: 16px;
    height: 16px;
    margin: 5px 0 0 3px;
}

.sheettabs .dots {
    width: 33px;
}

.hscroll {
    width: 211px;
    height: 13px;
    margin-top: 6px;
    background: #dadada;
    display: flex;
}

.hscroll b {
    width: 136px;
    margin-left: 1px;
    background: #fff;
    border: 1px solid #b5b5b5;
}

.hscroll .rt {
    margin-left: auto;
}

/* overlays */
.pointer {
    position: absolute;
    left: 675px;
    top: 256px;
    width: 70px;
    height: 70px;
}

.watermark {
    position: absolute;
    left: 16px;
    top: 631px;
    color: #fff;
    font-weight: bold;
    text-shadow: 0 0 2px #222, 0 0 1px #222, 1px 1px 1px #222;
    white-space: nowrap;
}

.wm1 {
    font-size: 11px;
    line-height: 16px;
    letter-spacing: -.1px;
}

.wm2 {
    display: flex;
    align-items: center;
    height: 32px;
    margin-top: -2px;
    font-size: 17px;
    letter-spacing: .3px;
}

.sc {
    width: 114px;
}

.ring {
    width: 32px;
    height: 32px;
    border: 4px solid #4a7ea6;
    border-radius: 50%;
    background: radial-gradient(circle, #3f95cf 5.500px, #f4f4f4 6.500px);
    box-shadow: 0 1px 2px #555;
}

.ma {
    margin-left: 5px;
    letter-spacing: 0;
}
```
